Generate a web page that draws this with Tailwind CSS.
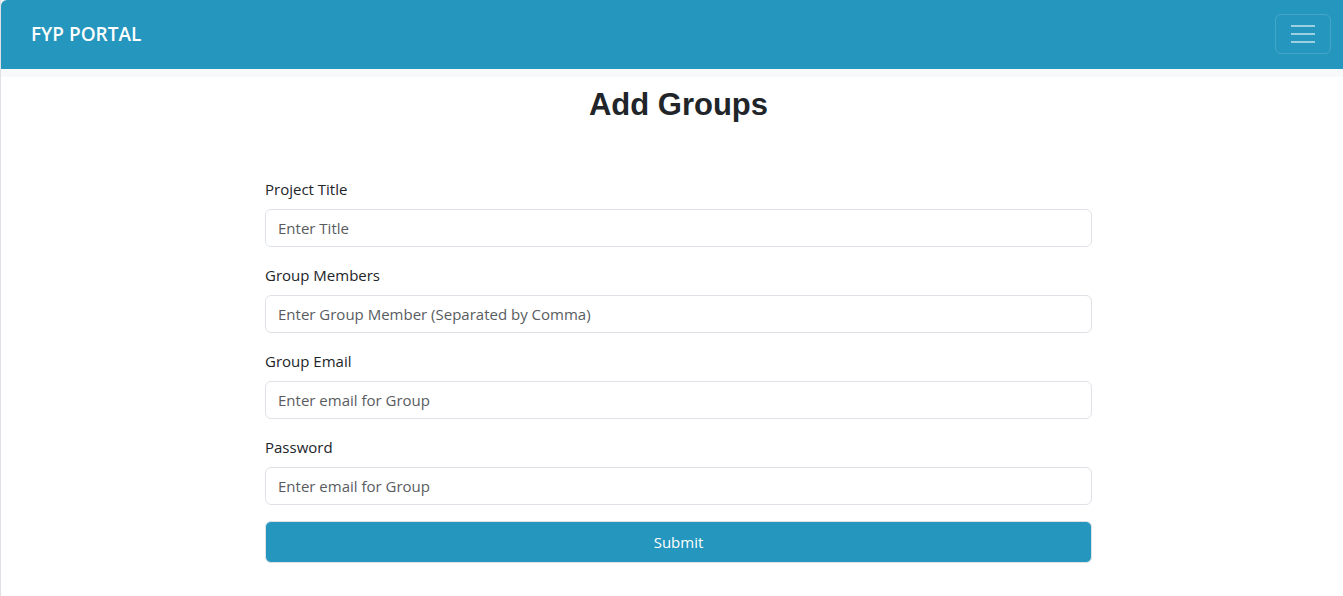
<!DOCTYPE html>
<html lang="en">
<head>
<meta charset="utf-8">
<meta name="viewport" content="width=device-width, initial-scale=1">
<title>FYP Portal</title>
<script src="https://cdn.jsdelivr.net/npm/@tailwindcss/browser@4"></script>
</head>
<body class="min-h-screen border-l border-[#dee2e6] bg-white font-['Open_Sans','Noto_Sans',sans-serif] text-[15px] leading-6 text-[#212529]">
  <header class="bg-[#f8f9fa] pb-2">
    <nav class="flex items-center justify-between rounded-tl-md bg-[#2596be] pt-3.5 pr-3 pb-[15px] pl-[30px]">
      <a href="#" class="text-[19px] leading-7 font-semibold text-white">FYP PORTAL</a>
      <button type="button" aria-label="Toggle navigation" class="flex h-10 w-14 items-center justify-center rounded-md border border-white/15">
        <svg class="size-[30px]" viewBox="0 0 30 30" fill="none" stroke="#fff" stroke-opacity=".55" stroke-width="2" stroke-linecap="butt" aria-hidden="true"><path d="M3 7h24M3 15h24M3 23h24"/></svg>
      </button>
    </nav>
  </header>
  <main class="pt-2 pb-8 pl-[13px]">
    <h1 class="text-center font-['Liberation_Sans',sans-serif] text-[31px] leading-10 font-bold">Add Groups</h1>
    <form class="mx-auto mt-[52px] flex max-w-[827px] flex-col gap-4">
      <div class="flex flex-col gap-2">
        <label for="title">Project Title</label>
        <input id="title" type="text" placeholder="Enter Title" class="h-[38px] w-full rounded-md border border-[#dee2e6] px-3 placeholder:text-[#595c5f]">
      </div>
      <div class="flex flex-col gap-2">
        <label for="members">Group Members</label>
        <input id="members" type="text" placeholder="Enter Group Member (Separated by Comma)" class="h-[38px] w-full rounded-md border border-[#dee2e6] px-3 placeholder:text-[#595c5f]">
      </div>
      <div class="flex flex-col gap-2">
        <label for="email">Group Email</label>
        <input id="email" type="email" placeholder="Enter email for Group" class="h-[38px] w-full rounded-md border border-[#dee2e6] px-3 placeholder:text-[#595c5f]">
      </div>
      <div class="flex flex-col gap-2">
        <label for="password">Password</label>
        <input id="password" type="password" placeholder="Enter email for Group" class="h-[38px] w-full rounded-md border border-[#dee2e6] px-3 placeholder:text-[#595c5f]">
      </div>
      <button type="submit" class="h-[42px] w-full rounded-md border border-[#dee2e6] bg-[#2596be] text-white">Submit</button>
    </form>
  </main>
</body>
</html>
